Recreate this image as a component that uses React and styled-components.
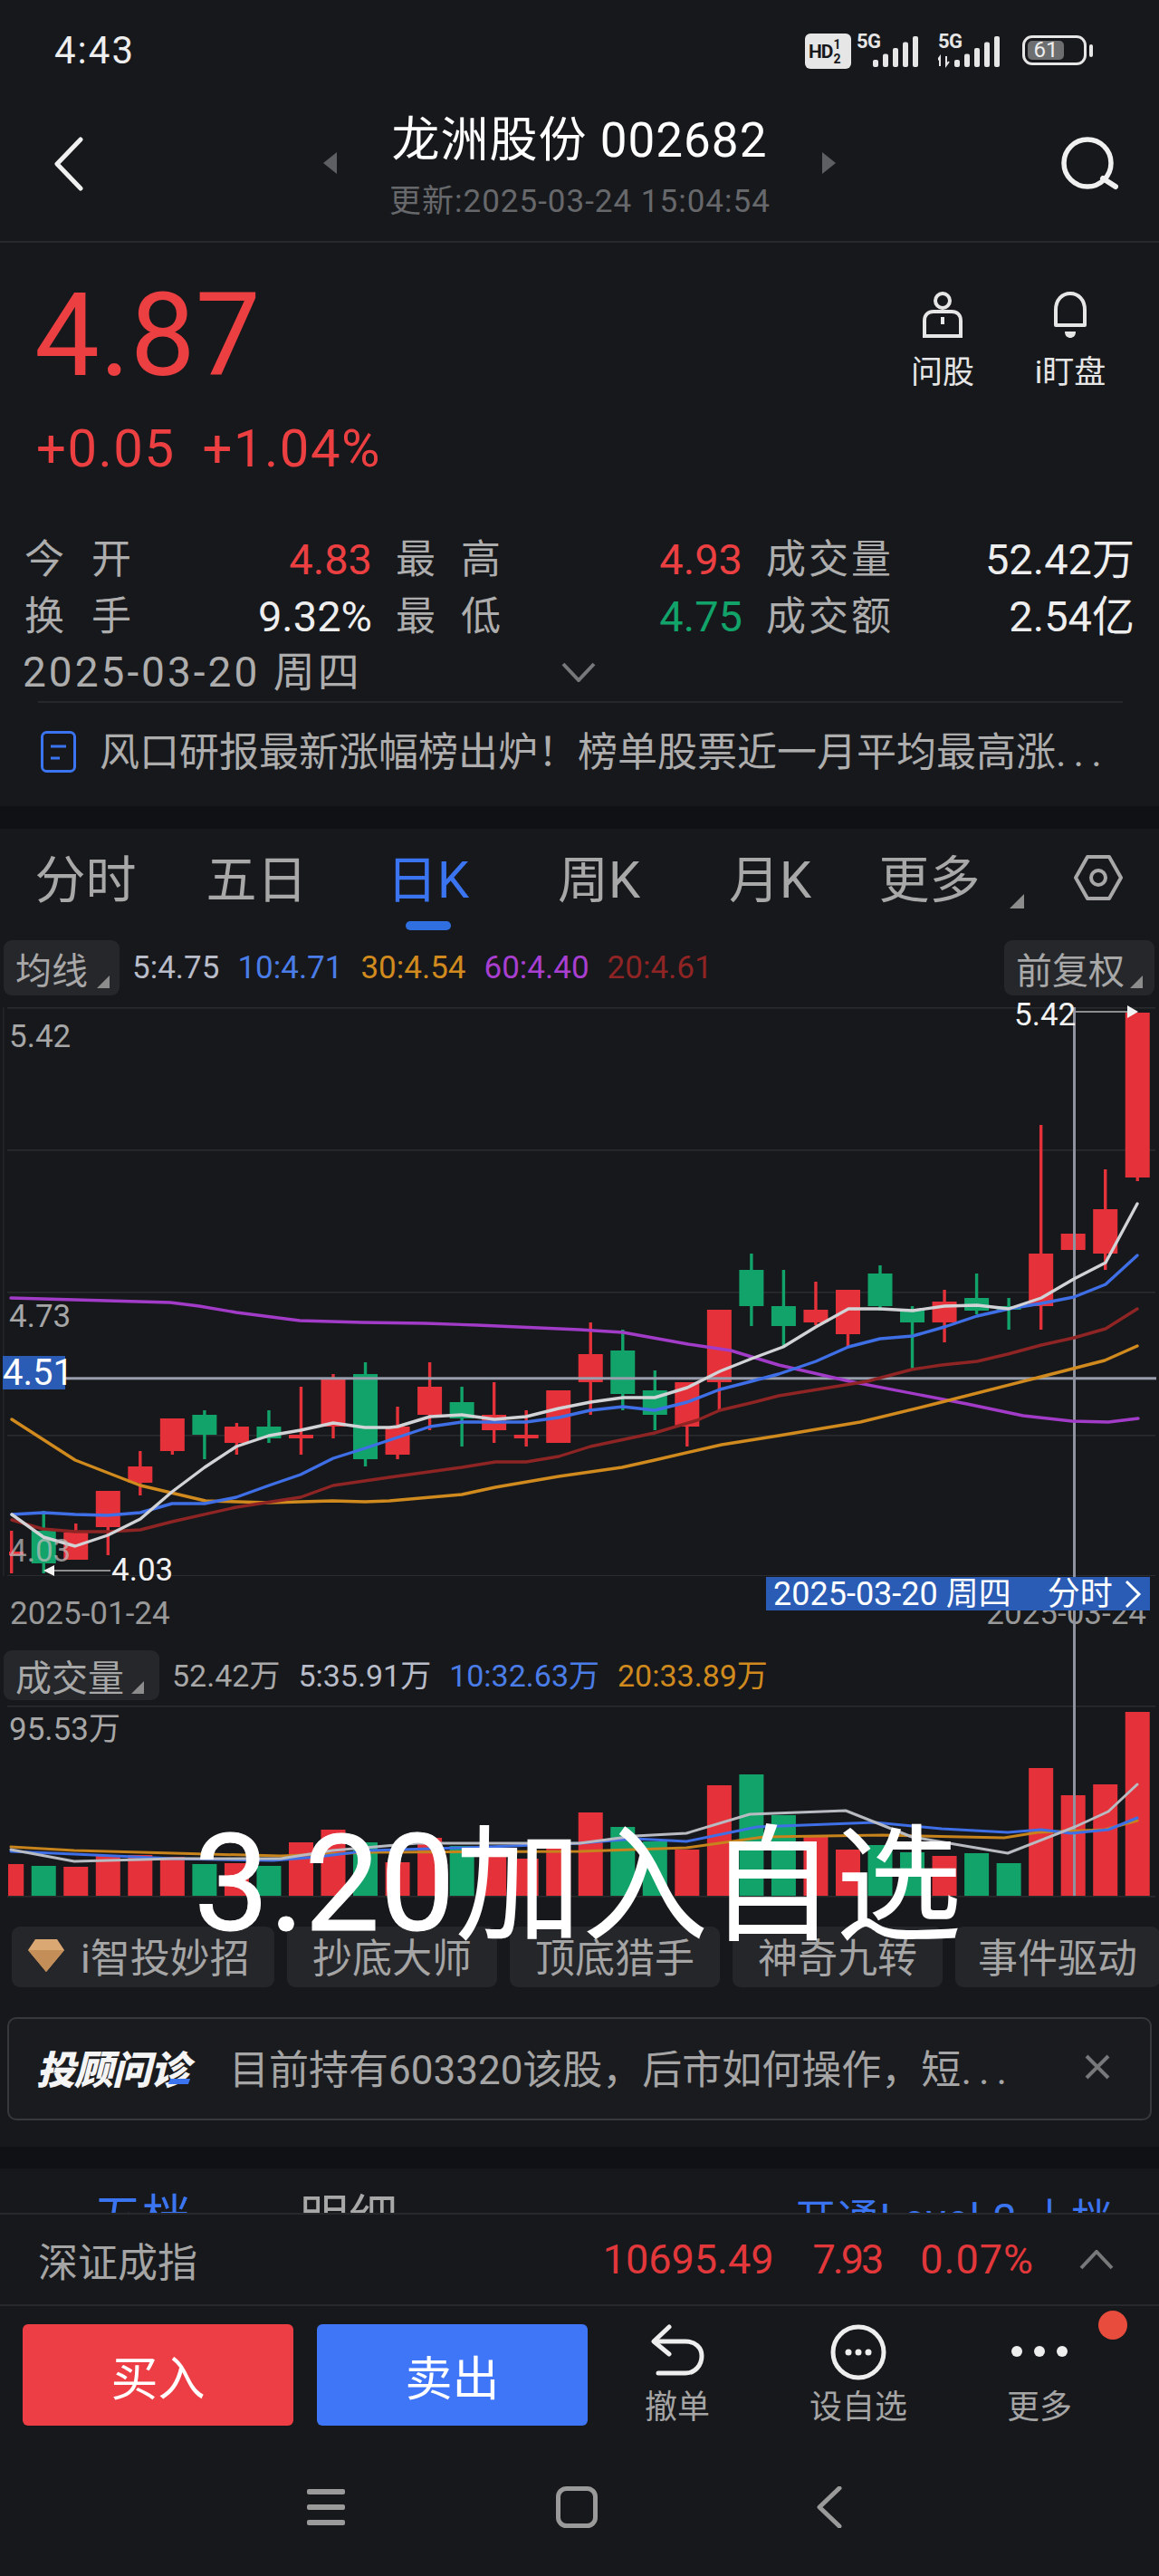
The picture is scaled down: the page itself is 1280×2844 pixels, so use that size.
import React from "react";
import styled, { createGlobalStyle } from "styled-components";

const RED = "#e5323a";
const GREEN = "#12a36b";
const TAG_BLUE = "#2a5bb5";
const GREY = "#a6a6a6";

// x position of each candle, page coords are used for every y below
const cx = (i) => 12.7 + 35.53 * i;

// [colour, wick top, wick bottom, body top, body bottom]
const KLINES = [
  ["r", 1690, 1737, 1713, 1717], ["g", 1668, 1737, 1690, 1726], ["r", 1682, 1722, 1692, 1722],
  ["r", 1646, 1717, 1646, 1686], ["r", 1602, 1651, 1619, 1637], ["r", 1566, 1606, 1566, 1602],
  ["g", 1557, 1611, 1562, 1584], ["r", 1571, 1606, 1575, 1593], ["g", 1557, 1593, 1575, 1588],
  ["r", 1531, 1606, 1584, 1588], ["r", 1517, 1588, 1523, 1575], ["g", 1504, 1619, 1517, 1611],
  ["r", 1553, 1611, 1575, 1606], ["r", 1504, 1579, 1531, 1562], ["g", 1531, 1597, 1548, 1566],
  ["r", 1526, 1593, 1562, 1579], ["r", 1557, 1597, 1584, 1588], ["r", 1535, 1593, 1535, 1593],
  ["r", 1460, 1562, 1495, 1526], ["g", 1468, 1557, 1491, 1539], ["g", 1513, 1579, 1535, 1562],
  ["r", 1526, 1597, 1526, 1575], ["r", 1446, 1557, 1446, 1526], ["g", 1384, 1464, 1402, 1442],
  ["g", 1402, 1487, 1442, 1464], ["r", 1415, 1463, 1446, 1460], ["r", 1424, 1487, 1424, 1473],
  ["g", 1397, 1447, 1406, 1442], ["g", 1442, 1513, 1446, 1460], ["r", 1424, 1482, 1437, 1460],
  ["g", 1406, 1451, 1433, 1447], ["g", 1433, 1468, 1442, 1446], ["r", 1242, 1468, 1384, 1442],
  ["r", 1362, 1380, 1362, 1380], ["r", 1291, 1402, 1335, 1384], ["r", 1118, 1304, 1118, 1300],
];

const MA60 = "12,1433 188,1438 220,1442 261,1449 331,1458 400,1460 469,1461 527,1463 640,1468 688,1471 760,1484 807,1491 860,1507 938,1525 1068,1550 1130,1563 1184,1569 1224,1570 1257,1566";
const MA30 = "13,1567 83,1612 155,1640 227,1657 297,1659 367,1657 403,1658 430,1657 510,1650 547,1642 617,1630 687,1620 723,1612 797,1595 860,1585 950,1570 1032,1550 1142,1522 1220,1502 1256,1486";
const MA20 = "13,1678 47,1688 83,1691 119,1691 155,1689 190,1680 261,1664 332,1653 368,1640 430,1631 510,1620 547,1614 581,1614 617,1608 652,1597 723,1582 770,1568 795,1557 833,1548 860,1541 958,1525 1007,1512 1040,1507 1079,1503 1113,1495 1150,1485 1186,1477 1221,1467 1256,1445";
const MA10 = "13,1672 48,1670 83,1672 119,1673 155,1670 190,1660 226,1660 261,1653 297,1640 332,1628 368,1610 403,1599 430,1590 439,1587 475,1575 510,1570 546,1570 581,1570 617,1565 652,1557 688,1553 723,1557 759,1548 795,1534 830,1525 860,1517 901,1503 937,1487 972,1478 1008,1475 1043,1465 1079,1453 1114,1445 1150,1439 1186,1432 1221,1418 1256,1386";
const MA5 = "13,1672 48,1697 83,1707 119,1695 155,1677 190,1647 226,1620 261,1597 297,1585 332,1579 368,1571 403,1576 430,1576 439,1575 475,1564 510,1562 546,1567 581,1564 617,1555 652,1548 688,1543 723,1543 759,1532 795,1514 830,1500 865,1487 901,1465 937,1445 972,1445 1008,1447 1043,1442 1079,1441 1114,1445 1150,1433 1186,1412 1221,1394 1256,1329";

const VOLUME_TOPS = [
  2058, 2060, 2061, 2048, 2048, 2050, 2058, 2057, 2060, 2034, 2020, 2034,
  2056, 2029, 2038, 2045, 2052, 2038, 2001, 2017, 2033, 2042, 1971, 1959,
  2004, 2028, 2042, 2037, 2045, 2049, 2046, 2057, 1952, 1982, 1970, 1890,
];

const VOL_WHITE = "12,2042 82,2055 192,2052 310,2052 367,2043 461,2035 514,2035 640,2035 701,2027 758,2024 828,2003 934,1999 1007,2028 1113,2046 1187,2017 1224,2000 1256,1970";
const VOL_BLUE = "12,2044 82,2047 192,2052 302,2054 351,2050 408,2043 514,2040 640,2035 701,2030 758,2033 836,2017 966,2012 1040,2019 1113,2023 1150,2020 1183,2024 1224,2020 1256,2007";
const VOL_ORANGE = "12,2039 82,2043 192,2046 310,2049 408,2045 640,2044 758,2040 844,2028 975,2026 1109,2029 1146,2023 1220,2020 1256,2010";

const GlobalStyle = createGlobalStyle`
  html, body { margin: 0; padding: 0; background: #17181b; }
  * { box-sizing: border-box; }
`;

const Page = styled.div`
  position: relative;
  width: 1280px;
  height: 2844px;
  overflow: hidden;
  background: #17181b;
  color: #fff;
  font-family: Roboto, "Noto Sans CJK SC", sans-serif;
`;

/* status bar */
const StatusBar = styled.div`
  height: 100px;
  display: flex;
  align-items: flex-start;
  justify-content: space-between;
  padding: 36px 80px 0 60px;
`;
const Clock = styled.div`
  font-size: 42px;
  line-height: 40px;
  letter-spacing: 2px;
  color: #eee;
`;
const StatusIcons = styled.div`
  display: flex;
  align-items: flex-start;
`;
const HdBadge = styled.div`
  width: 51px;
  height: 39px;
  display: flex;
  align-items: center;
  border-radius: 6px;
  background: #e6e6e6;
  color: #17181b;
  font-size: 21px;
  font-weight: 700;
  padding-left: 4px;
  letter-spacing: -1px;
  margin-top: 1px;
`;
const HdFraction = styled.span`
  display: flex;
  flex-direction: column;
  margin-left: 1px;
  font-size: 14px;
  line-height: 16px;
  letter-spacing: 0;
`;
const Signal = styled.div`
  position: relative;
  width: 76px;
  height: 40px;
  margin-left: ${(p) => p.$gap}px;
  margin-top: 1px;
`;
const FiveG = styled.span`
  position: absolute;
  left: 0;
  top: 0;
  font-size: 22px;
  line-height: 18px;
  font-weight: 700;
  letter-spacing: -0.5px;
  color: #e6e6e6;
`;
const Battery = styled.div`
  position: relative;
  width: 71px;
  height: 33px;
  margin-left: 17px;
  margin-top: 3px;
  border: 3px solid #e6e6e6;
  border-radius: 11px;
  &::after {
    content: "";
    position: absolute;
    right: -10px;
    top: 7px;
    width: 4px;
    height: 14px;
    border-radius: 2px;
    background: #e6e6e6;
  }
`;
const BatteryFill = styled.div`
  position: absolute;
  left: 3px;
  top: 3px;
  bottom: 3px;
  width: 40px;
  border-radius: 5px;
  background: #6d6e70;
  color: #eee;
  font-size: 24px;
  line-height: 21px;
  text-align: center;
`;

/* stock title */
const Nav = styled.header`
  height: 168px;
  display: grid;
  grid-template-columns: 1fr auto 1fr;
  border-bottom: 2px solid #27282b;
`;
const NavSide = styled.div`
  display: flex;
  align-items: flex-start;
  justify-content: ${(p) => (p.$right ? "flex-end" : "flex-start")};
  padding: ${(p) => (p.$right ? "50px 45px 0 0" : "51px 0 0 58px")};
`;
const NavCenter = styled.div`
  display: flex;
  gap: 58px;
  align-items: flex-start;
`;
const NavArrow = styled.svg`
  margin-top: 68px;
  flex: none;
`;
const NavTitle = styled.div`
  text-align: center;
  width: 420px;
`;
const StockName = styled.div`
  font-size: 53px;
  line-height: 60px;
  margin-top: 25px;
  white-space: nowrap;
  letter-spacing: 1px;
`;
const Updated = styled.div`
  font-size: 35px;
  line-height: 40px;
  margin-top: 18px;
  color: #67686b;
  letter-spacing: 1px;
  white-space: nowrap;
`;

/* quote */
const QuoteTop = styled.section`
  height: 317px;
  display: flex;
  justify-content: space-between;
  padding: 37px 38px 0 38px;
`;
const Price = styled.div`
  font-size: 128px;
  line-height: 130px;
  color: #eb3f42;
`;
const Change = styled.div`
  display: flex;
  gap: 30px;
  margin: 30px 0 0 2px;
  font-size: 58px;
  line-height: 60px;
  letter-spacing: 1.5px;
  color: #eb3f42;
`;
const Actions = styled.div`
  display: flex;
  gap: 21px;
  padding-top: 17px;
`;
const Action = styled.div`
  width: 120px;
  display: flex;
  flex-direction: column;
  align-items: center;
  font-size: 35px;
  line-height: 40px;
  color: #e6e6e6;
  gap: 18px;
`;
const StatsGrid = styled.div`
  display: grid;
  grid-template-columns: 118px 266px 142px 267px 164px 269px;
  grid-auto-rows: 63px;
  align-items: center;
  padding-left: 27px;
  font-size: 44px;
`;
const StatLabel = styled.div`
  color: #adadad;
  font-size: 44px;
  line-height: 56px;
  margin-top: 2px;
  text-align: justify;
  text-align-last: justify;
  margin-left: ${(p) => (p.$inset ? "26px" : "0")};
  white-space: nowrap;
`;
const StatValue = styled.div`
  text-align: right;
  font-size: 47px;
  line-height: 56px;
  margin-top: 2px;
  color: ${(p) => p.$color};
  white-space: nowrap;
`;
const DateRow = styled.div`
  height: 63px;
  display: grid;
  grid-template-columns: 1fr auto 1fr;
  align-items: center;
  padding: 0 27px 1px 25px;
  font-size: 46px;
  line-height: 44px;
  color: #adadad;
  letter-spacing: 3px;
  white-space: nowrap;
`;
const Divider = styled.div`
  height: 2px;
  margin: 0 40px 0 42px;
  background: #26272a;
`;
const NewsRow = styled.div`
  height: 114px;
  display: flex;
  align-items: center;
  gap: 26px;
  padding: 0 0 6px 45px;
  font-size: 44px;
  color: #adadad;
  white-space: nowrap;
`;
const NewsText = styled.span`
  margin-bottom: 6px;
`;
const Dots = styled.span`
  letter-spacing: 8px;
`;
const SectionGap = styled.div`
  height: ${(p) => p.$h}px;
  background: #101114;
`;

/* period tabs */
const Tabs = styled.nav`
  height: 123px;
  display: grid;
  grid-template-columns: repeat(6, 189px) 1fr;
`;
const Tab = styled.div`
  position: relative;
  height: 92px;
  margin-top: 10px;
  display: flex;
  align-items: center;
  justify-content: center;
  padding-bottom: 10px;
  padding-left: ${(p) => p.$inset || 0}px;
  font-size: 56px;
  color: ${(p) => (p.$active ? "#3b74f0" : "#a8a8a8")};
  &::after {
    content: "";
    display: ${(p) => (p.$active ? "block" : "none")};
    position: absolute;
    left: 50%;
    bottom: -10px;
    width: 50px;
    height: 10px;
    margin-left: -25px;
    border-radius: 5px;
    background: #2f6fe0;
  }
`;
const Corner = styled.svg`
  flex: none;
  align-self: flex-end;
  margin: 0 0 ${(p) => p.$bottom}px ${(p) => p.$left}px;
`;
const GearCell = styled.div`
  height: 92px;
  margin-top: 10px;
  display: flex;
  align-items: center;
  padding: 0 0 4px 52px;
`;

/* legend rows */
const LegendRow = styled.div`
  height: ${(p) => p.$h}px;
  display: flex;
  align-items: center;
  padding: 0 5px ${(p) => p.$lift || 0}px 4px;
  gap: 20px;
  font-size: 35px;
  white-space: nowrap;
`;
const Chip = styled.div`
  flex: none;
  width: ${(p) => p.$w}px;
  height: ${(p) => p.$chipH}px;
  display: flex;
  align-items: center;
  padding-left: 13px;
  border-radius: 9px;
  background: #26272b;
  font-size: 40px;
  color: #a8a8a8;
  margin-left: ${(p) => (p.$push ? "auto" : "0")};
  margin-right: ${(p) => (p.$push ? "0" : "-6px")};
`;
const MaValue = styled.span`
  color: ${(p) => p.$color};
  font-size: ${(p) => p.$size || 35}px;
  margin-bottom: ${(p) => p.$lift || 0}px;
`;

/* charts */
const ChartStack = styled.div`
  position: relative;
`;
const ChartSvg = styled.svg`
  display: block;
`;
const AxisLabel = styled.span`
  position: absolute;
  left: ${(p) => p.$left}px;
  top: ${(p) => p.$top}px;
  font-size: ${(p) => p.$size || 35}px;
  line-height: 36px;
  color: ${(p) => p.$color || GREY};
  white-space: nowrap;
`;
const PriceTag = styled.span`
  position: absolute;
  left: 3px;
  top: 398px;
  width: 69px;
  height: 37px;
  background: ${TAG_BLUE};
  font-size: 40px;
  line-height: 37px;
  text-align: center;
`;
const AxisDates = styled.div`
  position: relative;
  height: 82px;
  display: flex;
  justify-content: space-between;
  padding: 24px 14px 0 11px;
  font-size: 35px;
  line-height: 36px;
  color: #999;
`;
const DateTag = styled.div`
  position: absolute;
  z-index: 2;
  right: 10px;
  top: 1px;
  height: 37px;
  width: 424px;
  display: flex;
  align-items: center;
  padding-left: 8px;
  background: ${TAG_BLUE};
  color: #fff;
  font-size: 36px;
  white-space: nowrap;
  svg {
    margin-left: 12px;
  }
`;
const DateTagKind = styled.span`
  margin-left: 40px;
`;
const Crosshair = styled.div`
  position: absolute;
  z-index: 1;
  left: 1185px;
  top: 641px;
  width: 3px;
  height: 140px;
  background: #8e939f;
`;

/* feature pills */
const Pills = styled.div`
  display: flex;
  gap: 14px;
  height: 67px;
  padding-left: 13px;
`;
const Pill = styled.div`
  flex: none;
  width: ${(p) => p.$w}px;
  display: flex;
  align-items: center;
  justify-content: ${(p) => (p.$lead ? "flex-start" : "center")};
  gap: 17px;
  padding: 0 0 4px ${(p) => (p.$lead ? 17 : 0)}px;
  border-radius: 9px;
  background: #25262a;
  font-size: 44px;
  color: #a5a5a5;
  white-space: nowrap;
`;

/* advisor card */
const AdvisorCard = styled.div`
  height: 114px;
  margin: 33px 8px 29px;
  display: flex;
  align-items: center;
  padding: 0 0 4px 30px;
  border: 2px solid #37383c;
  border-radius: 10px;
  background: #1a1b1e;
  font-size: 44px;
  color: #a5a5a5;
  white-space: nowrap;
`;
const AdvisorLogo = styled.div`
  position: relative;
  flex: none;
  width: 172px;
  margin-right: 41px;
  font-size: 43px;
  font-weight: 900;
  font-style: italic;
  letter-spacing: -1px;
  color: #f4f4f4;
  &::after {
    content: "";
    position: absolute;
    right: 3px;
    bottom: 12px;
    width: 22px;
    height: 6px;
    background: #3b74f0;
    transform: skewX(-20deg);
  }
`;
const AdvisorText = styled.div`
  flex: 1;
`;
const CloseIcon = styled.svg`
  flex: none;
  margin-right: 44px;
`;

/* order book tabs, mostly hidden by the fixed footer */
const PeekTabs = styled.div`
  height: 49px;
  overflow: hidden;
  display: flex;
  padding: 26px 50px 0 103px;
  font-size: 54px;
  line-height: 60px;
  color: #a8a8a8;
  white-space: nowrap;
`;
const PeekTab = styled.span`
  width: 228px;
  color: ${(p) => (p.$active ? "#3b74f0" : "#a8a8a8")};
`;
const PeekLink = styled.span`
  margin-left: auto;
  font-size: 46px;
  letter-spacing: 1px;
  color: #3b74f0;
`;

/* fixed footer */
const IndexRow = styled.div`
  height: 103px;
  display: flex;
  align-items: center;
  padding: 0 50px 0 42px;
  border-top: 2px solid #27282b;
  border-bottom: 2px solid #27282b;
  font-size: 44px;
  color: #a5a5a5;
`;
const IndexValues = styled.div`
  margin-left: auto;
  display: flex;
  gap: 43px;
  color: #e2383c;
  font-size: 45px;
  margin-right: 50px;
`;
const IndexValue = styled.span`
  letter-spacing: ${(p) => p.$ls || 0}px;
`;
const TradeRow = styled.div`
  position: relative;
  height: 154px;
  display: flex;
  align-items: flex-start;
  padding: 20px 0 0 25px;
  gap: 26px;
`;
const TradeButton = styled.button`
  width: 299px;
  height: 112px;
  border: 0;
  border-radius: 6px;
  background: ${(p) => p.$bg};
  color: #fff;
  font-family: inherit;
  font-size: 52px;
  padding: 0;
`;
const TradeIcons = styled.div`
  flex: 1;
  display: grid;
  grid-template-columns: 196px 204px 196px;
  margin-left: -25px;
`;
const TradeIcon = styled.div`
  display: flex;
  flex-direction: column;
  align-items: center;
  height: 112px;
  font-size: 36px;
  line-height: 40px;
  color: #a5a5a5;
  justify-content: space-between;
`;
const RedDot = styled.span`
  position: absolute;
  left: 1213px;
  top: 5px;
  width: 32px;
  height: 32px;
  border-radius: 50%;
  background: #e74c3c;
`;
const SystemNav = styled.div`
  height: 144px;
  display: flex;
  align-items: center;
  padding: 0 0 8px 339px;
  gap: 233px;
`;
const SystemBack = styled.svg`
  margin-left: 9px;
`;

/* handwritten note laid over the chart */
const Caption = styled.div`
  position: absolute;
  z-index: 5;
  left: 214px;
  top: 1996px;
  color: #fff;
  font-size: 140px;
  line-height: 170px;
  white-space: nowrap;
`;
const CaptionDigits = styled.span`
  font-size: 148px;
  -webkit-text-stroke: 1px #fff;
`;

const Triangle = ({ left, bottom, size = 14, color = "#8c8c8c" }) => (
  <Corner $left={left} $bottom={bottom} width={size} height={size} viewBox="0 0 14 14">
    <path d="M14 0V14H0Z" fill={color} />
  </Corner>
);

const SignalBars = ({ arrows }) => (
  <svg width="76" height="40" viewBox="0 0 76 40" style={{ position: "absolute", left: 0, top: 0 }}>
    {[0, 1, 2, 3, 4].map((i) => (
      <rect key={i} x={18 + i * 11} y={29 - i * 6.5} width="6" height={8 + i * 6.5} rx="2" fill="#e6e6e6" />
    ))}
    {arrows && <path d="M2 36V26L-1 30M9 25V35L12 31" stroke="#e6e6e6" strokeWidth="2" fill="none" />}
  </svg>
);

function Candles() {
  return KLINES.map(([c, wt, wb, bt, bb], i) => {
    const fill = c === "r" ? RED : GREEN;
    const x = cx(i);
    const left = Math.max(x - 13.5, 10);
    return (
      <g key={i} fill={fill}>
        <rect x={x - 1.7} y={wt} width="3.4" height={wb - wt} />
        <rect x={left} y={bt} width={x + 13.5 - left} height={Math.max(bb - bt, 4)} />
      </g>
    );
  });
}

function VolumeBars() {
  return VOLUME_TOPS.map((top, i) => {
    const x = cx(i);
    const left = Math.max(x - 13.5, 9);
    return (
      <rect
        key={i}
        x={left}
        y={top}
        width={x + 13.5 - left}
        height={2093 - top}
        fill={KLINES[i][0] === "r" ? RED : GREEN}
      />
    );
  });
}

const Line = ({ points, color, width = 3.4 }) => (
  <polyline points={points} fill="none" stroke={color} strokeWidth={width} strokeLinejoin="round" strokeLinecap="round" />
);

const GridLine = ({ y }) => <rect x="8" y={y} width="1268" height="1.6" fill="#2a2b2e" />;

function KlineChart() {
  return (
    <ChartSvg width="1280" height="641" viewBox="0 1099 1280 641">
      <rect x="3" y="1112" width="1.6" height="628" fill="#242528" />
      {[1112, 1269, 1426, 1584, 1739].map((y) => (
        <GridLine key={y} y={y} />
      ))}
      <Candles />
      <rect x="72" y="1520.3" width="1205" height="3" fill="#9a9fae" />
      <rect x="1185" y="1112" width="3" height="628" fill="#8e939f" />
      <Line points={MA60} color="#a23cc8" />
      <Line points={MA30} color="#d08a1e" />
      <Line points={MA20} color="#8f2424" />
      <Line points={MA10} color="#3f6fe6" />
      <Line points={MA5} color="#d2d3d6" />
      <rect x="1188" y="1116" width="60" height="2" fill="#8e8e8e" />
      <path d="M1245 1110L1257 1117L1245 1124Z" fill="#f2f2f2" />
      <rect x="60" y="1733" width="62" height="2" fill="#8e8e8e" />
      <path d="M60 1728L48 1734L60 1740Z" fill="#f2f2f2" />
    </ChartSvg>
  );
}

function VolumeChart() {
  return (
    <ChartSvg width="1280" height="247" viewBox="0 1880 1280 247">
      <GridLine y={1883} />
      <VolumeBars />
      <GridLine y={2093} />
      <rect x="1185" y="1880" width="3" height="213" fill="#8e939f" />
      <Line points={VOL_ORANGE} color="#c7831c" width="3" />
      <Line points={VOL_BLUE} color="#3f6fe6" width="3" />
      <Line points={VOL_WHITE} color="#b9bbc2" width="3" />
    </ChartSvg>
  );
}

export default function App() {
  return (
    <Page>
      <GlobalStyle />

      <StatusBar>
        <Clock>4:43</Clock>
        <StatusIcons>
          <HdBadge>
            HD
            <HdFraction>
              <span>1</span>
              <span>2</span>
            </HdFraction>
          </HdBadge>
          <Signal $gap={6}>
            <FiveG>5G</FiveG>
            <SignalBars />
          </Signal>
          <Signal $gap={14}>
            <FiveG>5G</FiveG>
            <SignalBars arrows />
          </Signal>
          <Battery>
            <BatteryFill>61</BatteryFill>
          </Battery>
        </StatusIcons>
      </StatusBar>

      <Nav>
        <NavSide>
          <svg width="36" height="60" viewBox="0 0 36 60" fill="none">
            <path d="M31 3L5 30L31 57" stroke="#f0f0f0" strokeWidth="5" strokeLinecap="round" strokeLinejoin="round" />
          </svg>
        </NavSide>
        <NavCenter>
          <NavArrow width="15" height="24" viewBox="0 0 15 24">
            <path d="M15 0V24L0 12Z" fill="#5e5f62" />
          </NavArrow>
          <NavTitle>
            <StockName>龙洲股份 002682</StockName>
            <Updated>更新:2025-03-24 15:04:54</Updated>
          </NavTitle>
          <NavArrow width="15" height="24" viewBox="0 0 15 24">
            <path d="M0 0V24L15 12Z" fill="#5e5f62" />
          </NavArrow>
        </NavCenter>
        <NavSide $right>
          <svg width="64" height="60" viewBox="0 0 64 60" fill="none">
            <circle cx="30" cy="30" r="26" stroke="#f0f0f0" strokeWidth="5.5" />
            <path d="M47 47L61 56" stroke="#f0f0f0" strokeWidth="6" strokeLinecap="round" />
          </svg>
        </NavSide>
      </Nav>

      <QuoteTop>
        <div>
          <Price>4.87</Price>
          <Change>
            <span>+0.05</span>
            <span>+1.04%</span>
          </Change>
        </div>
        <Actions>
          <Action>
            <svg width="46" height="52" viewBox="0 0 46 52" fill="none" stroke="#e6e6e6" strokeWidth="4">
              <circle cx="23" cy="10" r="8" />
              <path d="M3 49V32C3 26 7 22 13 22H33C39 22 43 26 43 32V49Z" />
              <path d="M23 28V36" />
            </svg>
            <span>问股</span>
          </Action>
          <Action>
            <svg width="40" height="52" viewBox="0 0 40 52" fill="none" stroke="#e6e6e6" strokeWidth="4">
              <path d="M4 37V20C4 9 11 2 20 2C29 2 36 9 36 20V37Z" strokeLinejoin="round" />
              <path d="M14 44H26C26 49 23 51 20 51C17 51 14 49 14 44Z" fill="#e6e6e6" stroke="none" />
            </svg>
            <span>i盯盘</span>
          </Action>
        </Actions>
      </QuoteTop>

      <StatsGrid>
        <StatLabel>今 开</StatLabel>
        <StatValue $color="#eb3f42">4.83</StatValue>
        <StatLabel $inset>最 高</StatLabel>
        <StatValue $color="#eb3f42">4.93</StatValue>
        <StatLabel $inset>成交量</StatLabel>
        <StatValue $color="#eee">52.42万</StatValue>
        <StatLabel>换 手</StatLabel>
        <StatValue $color="#eee">9.32%</StatValue>
        <StatLabel $inset>最 低</StatLabel>
        <StatValue $color="#12a36b">4.75</StatValue>
        <StatLabel $inset>成交额</StatLabel>
        <StatValue $color="#eee">2.54亿</StatValue>
      </StatsGrid>
      <DateRow>
        <span>2025-03-20 周四</span>
        <svg width="38" height="22" viewBox="0 0 38 22" fill="none">
          <path d="M2 2L19 20L36 2" stroke="#77787a" strokeWidth="4" />
        </svg>
        <span />
      </DateRow>
      <Divider />
      <NewsRow>
        <svg width="39" height="46" viewBox="0 0 39 46" fill="none">
          <rect x="1.5" y="1.5" width="36" height="43" rx="5" stroke="#3b74f0" strokeWidth="3" />
          <path d="M11 17H28M11 30H21" stroke="#3b74f0" strokeWidth="3" />
        </svg>
        <NewsText>
          风口研报最新涨幅榜出炉！榜单股票近一月平均最高涨<Dots>...</Dots>
        </NewsText>
      </NewsRow>
      <SectionGap $h={25} />

      <Tabs>
        <Tab>分时</Tab>
        <Tab>五日</Tab>
        <Tab $active>日K</Tab>
        <Tab>周K</Tab>
        <Tab>月K</Tab>
        <Tab $inset={22}>
          更多
          <Triangle left={32} bottom={4} size={16} />
        </Tab>
        <GearCell>
          <svg width="54" height="52" viewBox="0 0 54 52" fill="none" stroke="#a8a8a8" strokeWidth="4">
            <path d="M15 3H39L52 26L39 49H15L2 26Z" strokeLinejoin="round" />
            <circle cx="27" cy="26" r="8" />
          </svg>
        </GearCell>
      </Tabs>

      <LegendRow $h={61}>
        <Chip $w={128} $chipH={61}>
          均线
          <Triangle left={10} bottom={8} />
        </Chip>
        <MaValue $color="#b9bcc9">5:4.75</MaValue>
        <MaValue $color="#4a7de8">10:4.71</MaValue>
        <MaValue $color="#d08a1e">30:4.54</MaValue>
        <MaValue $color="#a83fd0">60:4.40</MaValue>
        <MaValue $color="#8f2424">20:4.61</MaValue>
        <Chip $w={166} $chipH={61} $push>
          前复权
          <Triangle left={6} bottom={8} />
        </Chip>
      </LegendRow>

      <ChartStack>
        <KlineChart />
        <AxisLabel $left={10} $top={28}>5.42</AxisLabel>
        <AxisLabel $left={10} $top={337}>4.73</AxisLabel>
        <PriceTag>4.51</PriceTag>
        <AxisLabel $left={10} $top={596} $color="rgba(190,190,190,0.72)">4.03</AxisLabel>
        <AxisLabel $left={123} $top={617} $color="#f2f2f2">4.03</AxisLabel>
        <AxisLabel $left={1120} $top={4} $color="#f2f2f2">5.42</AxisLabel>
        <Crosshair />
        <AxisDates>
          <span>2025-01-24</span>
          <span>2025-03-24</span>
          <DateTag>
            <span>2025-03-20 周四</span>
            <DateTagKind>分时</DateTagKind>
            <svg width="20" height="32" viewBox="0 0 20 32" fill="none">
              <path d="M3 2L17 16L3 30" stroke="#fff" strokeWidth="3" />
            </svg>
          </DateTag>
        </AxisDates>
        <LegendRow $h={58} $lift={3}>
          <Chip $w={172} $chipH={55}>
            成交量
            <Triangle left={8} bottom={7} />
          </Chip>
          <MaValue $color="#a8a8a8" $size={34} $lift={4}>52.42万</MaValue>
          <MaValue $color="#b9bcc9" $size={34} $lift={4}>5:35.91万</MaValue>
          <MaValue $color="#4a7de8" $size={34} $lift={4}>10:32.63万</MaValue>
          <MaValue $color="#d08a1e" $size={34} $lift={4}>20:33.89万</MaValue>
        </LegendRow>
        <VolumeChart />
        <AxisLabel $left={10} $top={793}>95.53万</AxisLabel>
      </ChartStack>

      <Pills>
        <Pill $w={290} $lead>
          <svg width="42" height="38" viewBox="0 0 42 38">
            <path d="M9 1H33L41 13L21 37L1 13Z" fill="#d9a873" />
            <path d="M1 13H41L21 37Z" fill="#c48e58" />
          </svg>
          i智投妙招
        </Pill>
        <Pill $w={232}>抄底大师</Pill>
        <Pill $w={232}>顶底猎手</Pill>
        <Pill $w={232}>神奇九转</Pill>
        <Pill $w={226}>事件驱动</Pill>
      </Pills>

      <AdvisorCard>
        <AdvisorLogo>投顾问诊</AdvisorLogo>
        <AdvisorText>
          目前持有603320该股，后市如何操作，短<Dots>...</Dots>
        </AdvisorText>
        <CloseIcon width="28" height="28" viewBox="0 0 28 28" fill="none">
          <path d="M2 2L26 26M26 2L2 26" stroke="#77787a" strokeWidth="4" />
        </CloseIcon>
      </AdvisorCard>
      <SectionGap $h={24} />

      <PeekTabs>
        <PeekTab $active>五档</PeekTab>
        <PeekTab>明细</PeekTab>
        <PeekLink>开通Level-2 十档</PeekLink>
      </PeekTabs>

      <IndexRow>
        <span>深证成指</span>
        <IndexValues>
          <IndexValue>10695.49</IndexValue>
          <IndexValue $ls={-3}>7.93</IndexValue>
          <IndexValue $ls={1}>0.07%</IndexValue>
        </IndexValues>
        <svg width="38" height="22" viewBox="0 0 38 22" fill="none">
          <path d="M2 20L19 2L36 20" stroke="#77787a" strokeWidth="4" />
        </svg>
      </IndexRow>

      <TradeRow>
        <TradeButton $bg="#ee3e45">买入</TradeButton>
        <TradeButton $bg="#3f76f8">卖出</TradeButton>
        <TradeIcons>
          <TradeIcon>
            <svg width="62" height="58" viewBox="0 0 62 58" fill="none" stroke="#eee" strokeWidth="5">
              <path d="M22 3L5 19L22 33" strokeLinecap="round" strokeLinejoin="round" />
              <path d="M6 19H40C51 19 58 26 58 35C58 45 51 54 40 54H10" strokeLinecap="round" />
            </svg>
            <span>撤单</span>
          </TradeIcon>
          <TradeIcon>
            <svg width="62" height="62" viewBox="0 0 62 62" fill="none">
              <circle cx="31" cy="31" r="28" stroke="#eee" strokeWidth="5" />
              <circle cx="20" cy="31" r="3.5" fill="#eee" />
              <circle cx="31" cy="31" r="3.5" fill="#eee" />
              <circle cx="42" cy="31" r="3.5" fill="#eee" />
            </svg>
            <span>设自选</span>
          </TradeIcon>
          <TradeIcon>
            <svg width="64" height="62" viewBox="0 0 64 62">
              <circle cx="7" cy="30" r="6" fill="#eee" />
              <circle cx="32" cy="30" r="6" fill="#eee" />
              <circle cx="57" cy="30" r="6" fill="#eee" />
            </svg>
            <span>更多</span>
          </TradeIcon>
        </TradeIcons>
        <RedDot />
      </TradeRow>

      <SystemNav>
        <svg width="42" height="40" viewBox="0 0 42 40" fill="#9a9a9a">
          <rect x="0" y="0" width="42" height="6" rx="2" />
          <rect x="0" y="17" width="42" height="6" rx="2" />
          <rect x="0" y="34" width="42" height="6" rx="2" />
        </svg>
        <svg width="46" height="46" viewBox="0 0 46 46" fill="none">
          <rect x="2.5" y="2.5" width="41" height="41" rx="9" stroke="#9a9a9a" strokeWidth="5" />
        </svg>
        <SystemBack width="28" height="46" viewBox="0 0 28 46" fill="none">
          <path d="M25 2L3 23L25 44" stroke="#9a9a9a" strokeWidth="5" strokeLinecap="round" strokeLinejoin="round" />
        </SystemBack>
      </SystemNav>

      <Caption>
        <CaptionDigits>3.20</CaptionDigits>加入自选
      </Caption>
    </Page>
  );
}
